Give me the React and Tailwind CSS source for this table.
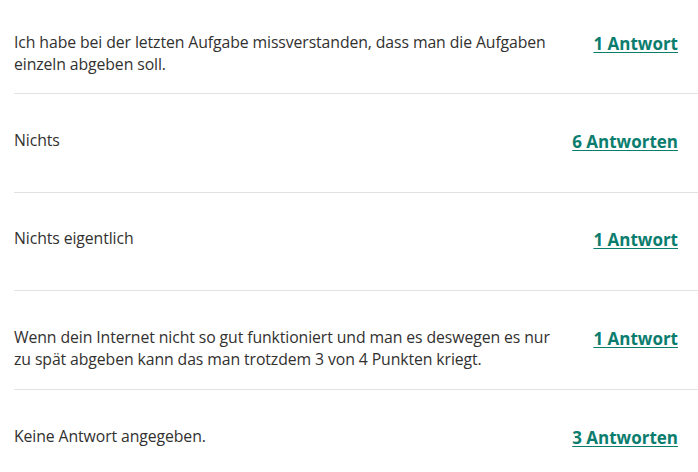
export default function App() {
  const rows = [
    { text: "Ich habe bei der letzten Aufgabe missverstanden, dass man die Aufgaben einzeln abgeben soll.", link: "1 Antwort", h: "h-[94px] pt-[31px]" },
    { text: "Nichts", link: "6 Antworten", h: "h-[99px] pt-[35px]" },
    { text: "Nichts eigentlich", link: "1 Antwort", h: "h-[98px] pt-[34px]" },
    { text: "Wenn dein Internet nicht so gut funktioniert und man es deswegen es nur zu spät abgeben kann das man trotzdem 3 von 4 Punkten kriegt.", link: "1 Antwort", h: "h-[99px] pt-[35px]" },
    { text: "Keine Antwort angegeben.", link: "3 Antworten", h: "h-[99px] pt-[35px]" },
  ];

  return (
    <div className="w-[698px] h-[472px] overflow-hidden bg-white pl-[14px] font-['Open_Sans',sans-serif]">
      {rows.map((row, i) => (
        <div
          key={i}
          className={`flex items-start justify-between border-b border-[#e1e1e1] ${row.h}`}
        >
          <p className="w-[545px] text-[15.8px] leading-[22px] tracking-[-0.1px] text-[#323130]">{row.text}</p>
          <a
            href="#"
            className="mr-[20px] shrink-0 text-[17px] leading-[26px] font-bold text-[#0b7d6e] underline underline-offset-2"
          >
            {row.link}
          </a>
        </div>
      ))}
    </div>
  );
}
